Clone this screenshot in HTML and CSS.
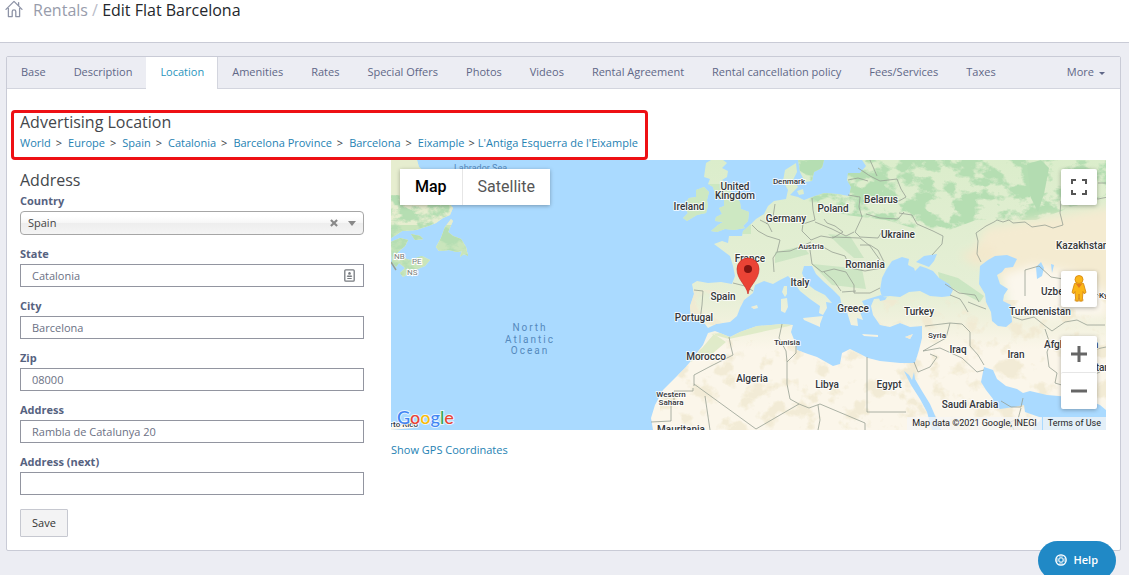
FILE: index.html
```html
<!DOCTYPE html>
<html lang="en">
<head>
<meta charset="utf-8">
<meta name="viewport" content="width=device-width, initial-scale=1">
<title>Edit Flat Barcelona</title>
<link rel="stylesheet" href="styles.css">
</head>
<body>
<header class="page-header">
  <a class="home" href="#" aria-label="Home">
    <svg width="18" height="18" viewBox="0 0 18 18" fill="none" stroke="#8d93a6" stroke-width="1.3" stroke-linejoin="round" stroke-linecap="round">
      <path d="M1 9.4 9 1.4l8 8M13.6 5.6V2.6M3.4 8.4v8.2h3.8v-5a1.8 1.8 0 0 1 3.6 0v5h3.8V8.4"/>
    </svg>
  </a>
  <h1 class="title"><a class="title-parent" href="#">Rentals</a> <span class="title-slash">/</span> Edit Flat Barcelona</h1>
</header>

<main class="panel">
  <nav class="tabs">
    <a class="tab" href="#">Base</a>
    <a class="tab" href="#">Description</a>
    <a class="tab tab-active" href="#" aria-current="page">Location</a>
    <a class="tab" href="#">Amenities</a>
    <a class="tab" href="#">Rates</a>
    <a class="tab" href="#">Special Offers</a>
    <a class="tab" href="#">Photos</a>
    <a class="tab" href="#">Videos</a>
    <a class="tab" href="#">Rental Agreement</a>
    <a class="tab" href="#">Rental cancellation policy</a>
    <a class="tab" href="#">Fees/Services</a>
    <a class="tab" href="#">Taxes</a>
    <button class="tab tab-more" type="button">More <span class="caret"></span></button>
  </nav>

  <section class="advertising">
    <h2 class="heading">Advertising Location</h2>
    <nav class="crumbs" aria-label="Advertising location">
      <a href="#">World</a><span class="sep">&gt;</span>
      <a href="#">Europe</a><span class="sep">&gt;</span>
      <a href="#">Spain</a><span class="sep">&gt;</span>
      <a href="#">Catalonia</a><span class="sep">&gt;</span>
      <a href="#">Barcelona Province</a><span class="sep">&gt;</span>
      <a href="#">Barcelona</a><span class="sep">&gt;</span>
      <a href="#">Eixample</a><span class="sep sep-last">&gt;</span>
      <a href="#">L'Antiga Esquerra de l'Eixample</a>
    </nav>
  </section>

  <div class="columns">
    <form class="address">
      <h2 class="heading">Address</h2>
      <div class="field">
        <label for="country">Country</label>
        <div class="control">
          <select id="country" class="select"><option>Spain</option></select>
          <button class="clear" type="button" aria-label="Clear country">
            <svg width="9" height="9" viewBox="0 0 9 9" stroke="#888" stroke-width="2.4"><path d="M1 1l7 7M8 1 1 8"/></svg>
          </button>
          <span class="select-arrow"></span>
        </div>
      </div>
      <div class="field">
        <label for="state">State</label>
        <div class="control">
          <input id="state" class="input" type="text" value="Catalonia">
          <svg class="contact" width="11" height="13" viewBox="0 0 11 13" fill="none" stroke="#777b80"><rect x=".8" y=".8" width="9.4" height="11.4" rx="1" stroke-width="1.3"/><circle cx="5.500" cy="4.300" r="1.200" fill="#777b80" stroke="none"/><path d="M3.300 7.500c0-2 4.400-2 4.400 0zM3.300 9.500h4.400"/></svg>
        </div>
      </div>
      <div class="field">
        <label for="city">City</label>
        <input id="city" class="input" type="text" value="Barcelona">
      </div>
      <div class="field">
        <label for="zip">Zip</label>
        <input id="zip" class="input" type="text" value="08000">
      </div>
      <div class="field">
        <label for="address">Address</label>
        <input id="address" class="input" type="text" value="Rambla de Catalunya 20">
      </div>
      <div class="field">
        <label for="address-next">Address (next)</label>
        <input id="address-next" class="input" type="text" value="">
      </div>
      <button class="save" type="submit">Save</button>
    </form>

    <div class="map-column">
      <div class="map">
        <svg class="map-canvas" viewBox="391 160 715 270" preserveAspectRatio="xMidYMid slice">
          <defs>
            <linearGradient id="ground" gradientUnits="userSpaceOnUse" x1="0" y1="160" x2="0" y2="430">
              <stop offset="0" stop-color="#dbedcb"/>
              <stop offset=".3" stop-color="#e2eed2"/>
              <stop offset=".5" stop-color="#e6efd6"/>
              <stop offset=".6" stop-color="#f1f1dd"/>
              <stop offset=".7" stop-color="#fbf6ea"/>
              <stop offset="1" stop-color="#fbf6ea"/>
            </linearGradient>
            <filter id="soft" x="-20%" y="-20%" width="140%" height="140%"><feGaussianBlur stdDeviation="5"/></filter>
            <filter id="woods" x="0" y="0" width="100%" height="100%" color-interpolation-filters="sRGB">
              <feTurbulence type="fractalNoise" baseFrequency=".045 .07" numOctaves="5" seed="8"/>
              <feColorMatrix values="0 0 0 0 .71  0 0 0 0 .87  0 0 0 0 .7  0 8 0 0 -3.500" result="n"/>
              <feComposite in="n" in2="SourceAlpha" operator="in"/>
            </filter>
            <filter id="relief" x="0" y="0" width="100%" height="100%" color-interpolation-filters="sRGB">
              <feTurbulence type="fractalNoise" baseFrequency=".05" numOctaves="4" seed="3"/>
              <feColorMatrix values="0 0 0 0 .945  0 0 0 0 .915  0 0 0 0 .82  0 7 0 0 -3.700" result="n"/>
              <feComposite in="n" in2="SourceAlpha" operator="in"/>
            </filter>
            <clipPath id="coast">
              <path d="M391 160h26l2 7 8 7 12 4 6 14 4 11 4 5-3 7-7 3-7 5-8 3-12 4-14 1-6 4-5 3z"/>
              <path d="M451 219l-6 8-4 11-5 9 3 4 10-1 8 2 5-1-2 6 4-3 4 2-2-9-5-8-8-3-5-4 5-11z"/>
              <path d="M391 242l9-4 8 2-3 6-8 7 4 4 9 3 12-4 8 4-5 6-12 5-10 6-3-4 5-5-6-5-3 4-4-5z"/>
              <path d="M411 234l9 2 3 3-8 1z"/>
              <path d="M706 163l5-3h12l4 3-5 5 6 3-1 6-5 3 6 4 4 10 8 8 1 7 8 3-1 9-5 5 2 2-11 2-9-1-8 3-6-1 7-6 5-3-8-1 1-4 6-3-3-6 5-2 0-7-5-1 2-6-6 2-2-7-5-3 2-5-6-2z"/>
              <path d="M696 190l8-3 5 5-2 8 1 6-2 7-9 2-10 6-4-3 5-5-2-3 5-4-5-4 3-4 7-1z"/>
              <path d="M692 284L697 281 708 283 721 282 732 284 735 276 733 266 730 256 722 250 714 244 722 241 728 243 729 236 742 236 743 231 750 225 756 219 764 214 768 206 774 201 786 199 788 190 783 181 785 170 796 163 797 172 793 180 798 187 790 195 798 197 804 200 812 197 824 193 838 194 849 196 851 187 847 180 848 173 860 173 866 166 862 160 1106 160 1106 430 653 430 651 418 655 405 663 390 673 380 685 368 690 362 703 345 708 333 715 331 730 337 740 332 757 326 771 325 782 324 793 325 791 332 795 342 797 350 808 354 817 357 833 366 840 364 842 353 850 349 860 354 868 358 880 361 890 362 900 363 915 363 919 350 922 338 922 326 910 327 900 323 890 327 880 325 873 315 871 306 874 299 885 298 881 295 868 299 862 301 866 309 860 312 863 320 857 318 858 326 851 325 847 312 842 306 840 297 832 289 824 282 816 274 812 266 804 266 802 273 806 283 815 290 825 295 832 303 826 302 827 308 823 315 819 313 820 306 810 299 800 291 793 281 788 276 780 280 773 284 764 281 755 285 753 293 744 300 740 308 737 316 730 322 716 324 708 328 702 320 691 319 690 306 694 294z"/>
              <path d="M784 286l3 0 0 8-2 3-3-5zM781 299l6-1 1 9-3 6-4-2zM803 318l20-2-3 8 0 3-16-7zM862 334l16 1v2l-14-1zM905 337l8-3-3 5zM797 191l6-2 1 5-5 1zM751 307l6-2 1 3-4 1z"/>
              <path d="M798 160h26l-2 8-8 4-2 9-7 1-5-10z"/>
              <path d="M391 425h22v3l-22 2z"/>
            </clipPath>
          </defs>
          <rect x="391" y="160" width="715" height="270" fill="#aadaff"/>
          <g clip-path="url(#coast)">
            <rect x="391" y="160" width="715" height="270" fill="url(#ground)"/>
            <path d="M391 160h80v95h-80z" fill="#e6edcf"/>
            <path d="M391 225h90v70h-90z" fill="#c9e5bb"/>
            <path d="M706 184h45v50h-75v-40z" fill="#c8e6be" opacity=".8"/>
            <path d="M850 160h256v35l-70 25-60 0-40 15-50-15-40-5-40-15z" fill="#000" filter="url(#woods)"/>
            <path d="M391 195h80v80h-80zM798 160h26v25h-26z" fill="#000" filter="url(#woods)"/>
            <path d="M775 252l28-6 6 8-34 9zM828 234l22 2 14 22-10 0-14-12zM812 264l50 5 4 20-34-4z" fill="#b9dfb6" opacity=".55"/>
            <path d="M938 272l20 6 26 18-4 6-40-20z" fill="#b9dfb6" opacity=".6"/>
            <path d="M985 228l60-10 70-12v110l-60-6-50-25-30-35z" fill="#f4ebd1" filter="url(#soft)"/>
            <path d="M960 255l26-10 12 8-20 14z" fill="#f3e8cc" filter="url(#soft)"/>
            <path d="M1003 275l30-10 40 8 34 20v24l-60 2-38-10z" fill="#fbf7ed" filter="url(#soft)"/>
            <path d="M660 340h446v90h-446zM690 290h65v35h-65zM875 300h231v50h-231z" fill="#000" filter="url(#relief)" opacity=".8"/>
            <path d="M711 334l18 5 60-13 6-3-40 1-25 8zM690 362l12-14 12-14 12 8-14 12z" fill="#d9e9c2" opacity=".8"/>
            <path d="M1027 164l14-4 8 8-5 26-6 18-7-14z" fill="#b3dcb1"/>
          </g>
          <g fill="#aadaff">
            <path d="M880 290l2-12 4-8 6-9 10-4 7 2-1 6 6 3 1 3 5-5 6 2 7 3 6 7 10 6 4 6-3 6-8 1-12-1-10-5-11 1-9 5-10-1-8 1z"/>
            <path d="M916 262l8-6 13-2-3 7-5 6-5-2z"/>
            <path d="M879 298l8-1-2 3-5 1z"/>
            <path d="M980 266l8-6 7-4 12-1 10 4-4 8-8 1-3 4-5 3 3 9 8 5-4 6-1 6 8 4 1 17-6 5-8-1-6-5-1-9-5-10-1-8-6-10z"/>
            <path d="M1036 267l5-5 3 6-2 8-5 3zM1051 264l1 9 2-8z"/>
            <path d="M904 371l5 4 3 5 2-8 1 7 7 12 8 13 7 16 4 10h-9l-5-18-7-13-9-14z"/>
            <path d="M984 367l9 3 4 9 9 7 11 3 6 4 7-2 17 4 23 2 13 1 17 7 6 5v27h-76l4-10 8-9-17-6-1-7-10 2-14 2-7-2 0-8-7-9-5-8z"/>
          </g>
          <g fill="none" stroke="#97a093" stroke-width=".8" stroke-linejoin="round">
            <path d="M694 290l9 1-1 14-2 15M733 283l12 3 8 5M752 225l6 6 9 5 13 4-3 12-4 6 1 14M760 220l8 4 4 8M775 204l-2 13-7 7M812 198l1 12 2 10-12 4-1 7 9 9 10-4 12 2 10-6-8-6-8-3-3-4M777 252l13-1 12-5 9-4M815 222l17 7 14 7 8-4M848 195l12 2-1 10 3 10-7 15 5 5 18 1 5-8M848 180l10-2 10 3M858 168l12 8 10 5 17-2 4 10 5 8-7 4-17-2-19 2M866 214l14 4 18 1 6-7M899 213l13 2 5 9 16 7 10 5-1 8-10 11M832 237l28 1 10 8 10 14M818 244l14 8 13 4 5 12 15 3 17-3M810 250l2 14 10 8 12-3 12 3M824 272l10 9 7 10M846 272l8 13 0 8 16 0 10-5M842 292l14-1M860 245l10 0 8 5 6 12M870 160l7 16"/>
            <path d="M981 262l-4-8 1-13-2-8 10-7 8-4 3-2 6 2 6-2 4 3 12-1 7 5 13-2 8 3 10-3-3-12 1-12 10-2 5 3 8-3 2-3 12 3 10-2"/>
            <path d="M1025 296v-26l14-4 12 11 12 2 7 8 12 6 10-4 7 7 8-2M945 284l14 9 16 2 4 7M950 295l10 4 4 6 4 7M968 302l10 4 8 3M1013 317l9 3 12-3 10 8 8 6 13-9 12-2 10 5 18 0M1045 329l5 15-3 8 2 15 8 6-2 10 10 3 3 14"/>
            <path d="M925 326l25-3 12 1 8 8 0 14 8 9 6 10M950 323l-4 15-9 5-14 8M923 351l17-3 22 10 15 14 7-2M914 362l4 10 12-5 7-10-7-3M1001 401l10 6 10 0 2-9M1021 408l-3 11-8 3 4 8"/>
            <path d="M729 337l2 10 2 8-8 4-14 7-17 9v11M782 324l-3 14 7 13 1 11 9-9v-7M787 362l0 22 3 15 9 5-43 25-62-45M693 388v3h-19v9M671 400v21l-20 1M710 430l-5-34M799 404l10 4 11-4 45 19v7M818 405l2 15-2 10M867 357v55l39 0"/>
            <path d="M1098 183h8M1080 340l12 10 14-3M1065 372l15 8 20-8"/>
            <path d="M391 262l5 8" stroke-width="1.500"/>
          </g>
          <g class="place">
            <text x="689" y="210" text-anchor="middle">Ireland</text>
            <text x="735" y="190" text-anchor="middle">United</text>
            <text x="735" y="199" text-anchor="middle">Kingdom</text>
            <text x="786" y="222" text-anchor="middle">Germany</text>
            <text x="833" y="212" text-anchor="middle">Poland</text>
            <text x="881" y="203" text-anchor="middle">Belarus</text>
            <text x="898" y="238" text-anchor="middle">Ukraine</text>
            <text x="865" y="268" text-anchor="middle">Romania</text>
            <text x="750" y="262" text-anchor="middle">France</text>
            <text x="800" y="286" text-anchor="middle">Italy</text>
            <text x="723" y="300" text-anchor="middle">Spain</text>
            <text x="694" y="321" text-anchor="middle">Portugal</text>
            <text x="853" y="312" text-anchor="middle">Greece</text>
            <text x="919" y="315" text-anchor="middle">Turkey</text>
            <text x="706" y="360" text-anchor="middle">Morocco</text>
            <text x="752" y="382" text-anchor="middle">Algeria</text>
            <text x="827" y="388" text-anchor="middle">Libya</text>
            <text x="889" y="388" text-anchor="middle">Egypt</text>
            <text x="958" y="353" text-anchor="middle">Iraq</text>
            <text x="1016" y="358" text-anchor="middle">Iran</text>
            <text x="970" y="408" text-anchor="middle">Saudi Arabia</text>
            <text x="1040" y="315" text-anchor="middle">Turkmenistan</text>
            <text x="1056" y="249">Kazakhstan</text>
            <text x="1041" y="295">Uzbekistan</text>
            <text x="1099" y="298" class="small">Kyrgyzstan</text>
            <text x="1044" y="348">Afghanistan</text>
            <text x="1071" y="371">Pakistan</text>
            <text x="657" y="433">Mauritania</text>
          </g>
          <g class="place small">
            <text x="789" y="184" text-anchor="middle">Denmark</text>
            <text x="811" y="249" text-anchor="middle">Austria</text>
            <text x="787" y="345" text-anchor="middle">Tunisia</text>
            <text x="937" y="338" text-anchor="middle">Syria</text>
            <text x="671" y="397" text-anchor="middle">Western</text>
            <text x="671" y="405" text-anchor="middle">Sahara</text>
            <text x="418" y="427" text-anchor="end">Puerto Rico</text>
          </g>
          <g class="province">
            <text x="394" y="259">NB</text>
            <text x="412" y="264">PE</text>
            <text x="407" y="275">NS</text>
          </g>
          <g class="sea">
            <text x="454" y="171" class="sea-small">Labrador Sea</text>
            <text x="530" y="331" text-anchor="middle">North</text>
            <text x="530" y="343" text-anchor="middle">Atlantic</text>
            <text x="530" y="354" text-anchor="middle">Ocean</text>
          </g>
          <path d="M748 294c-1.500-9-11-14-11-25a11 11 0 0 1 22 0c0 11-9.500 16-11 25z" fill="#ea4335" stroke="#c5221f" stroke-width=".6"/>
          <circle cx="748" cy="269" r="4" fill="#811411"/>
        </svg>

        <div class="map-types">
          <button class="map-type map-type-active" type="button">Map</button>
          <button class="map-type" type="button">Satellite</button>
        </div>
        <button class="map-button fullscreen" type="button" aria-label="Toggle fullscreen">
          <svg width="16" height="16" viewBox="0 0 16 16" fill="none" stroke="#555" stroke-width="2"><path d="M1 5V1h4M11 1h4v4M15 11v4h-4M5 15H1v-4"/></svg>
        </button>
        <div class="map-tools">
          <button class="map-button" type="button" aria-label="Street View">
            <svg width="18" height="30" viewBox="0 0 18 30">
              <ellipse cx="9" cy="26" rx="5" ry="2" fill="#d9a441" opacity=".4"/>
              <path d="M4.500 9.500Q9 7.500 13.500 9.500L16 18.500l-2 1.200-1-2.200-.8 9.500h-2.400L9 20l-.8 7H5.800L5 17.500l-1 2.200-2-1.200z" fill="#fbb618" stroke="#d98b12" stroke-width=".9"/>
              <path d="M6 10l3 4 3-4z" fill="#e57c1e"/>
              <circle cx="9" cy="5.500" r="4" fill="#fbb618" stroke="#d98b12" stroke-width=".9"/>
            </svg>
          </button>
          <div class="zoom">
            <button class="map-button" type="button" aria-label="Zoom in">
              <svg width="16" height="16" viewBox="0 0 16 16" stroke="#666" stroke-width="3"><path d="M0 8h16M8 0v16"/></svg>
            </button>
            <button class="map-button" type="button" aria-label="Zoom out">
              <svg width="16" height="16" viewBox="0 0 16 16" stroke="#666" stroke-width="3"><path d="M0 8h16"/></svg>
            </button>
          </div>
        </div>
        <svg class="google" width="64" height="24" viewBox="0 0 64 24" role="img" aria-label="Google">
          <text x="2" y="18"><tspan fill="#4285f4">G</tspan><tspan fill="#ea4335">o</tspan><tspan fill="#fbbc05">o</tspan><tspan fill="#4285f4">g</tspan><tspan fill="#34a853">l</tspan><tspan fill="#ea4335">e</tspan></text>
        </svg>
        <div class="attribution">
          <span>Map data ©2021 Google, INEGI</span>
          <a href="#">Terms of Use</a>
        </div>
      </div>
      <a class="gps" href="#">Show GPS Coordinates</a>
    </div>
  </div>
</main>

<button class="help" type="button">
  <svg width="12" height="12" viewBox="0 0 12 12" fill="none" stroke="#fff"><circle cx="6" cy="6" r="5.200" stroke-width="1.300"/><circle cx="6" cy="6" r="2.200" stroke-width="1"/><path d="M5 .8v3M7 .8v3M5 8.200v3M7 8.200v3M.8 5h3M.8 7h3M8.200 5h3M8.200 7h3" stroke-width=".8"/></svg>
  Help
</button>
</body>
</html>
```

FILE: styles.css
```css
* { box-sizing: border-box; }

body {
  margin: 0;
  min-height: 100vh;
  background: #ecedf3;
  color: #3a3d42;
  font: 11px/16px "Open Sans", "Noto Sans", sans-serif;
}

a { color: #2582b3; text-decoration: none; }
button, input, select { font: inherit; }
button { cursor: pointer; }

.page-header {
  display: flex;
  align-items: flex-start;
  gap: 10px;
  padding: 0 5px 22px;
  background: #fff;
  border-bottom: 1px solid #c9cbd6;
}

.home { display: block; height: 18px; }

.title {
  margin: 0;
  color: #24272c;
  font-size: 16px;
  font-weight: 400;
  line-height: 20px;
}

.title-parent { color: #989cab; }
.title-slash { color: #b9bcc8; }

.panel {
  margin: 13px 8px 24px 6px;
  padding-bottom: 13px;
  background: #fff;
  border: 1px solid #c9cbd6;
  border-radius: 2px;
}

.tabs {
  display: flex;
  background: #ecedf3;
  border-bottom: 1px solid #d3d5de;
}

.tab {
  padding: 7px 13px 8px 14px;
  border: 0;
  border-right: 1px solid transparent;
  background: none;
  color: #5f6787;
  white-space: nowrap;
}

.tab-active {
  margin-bottom: -1px;
  background: #fff;
  border-right-color: #d3d5de;
  color: #2a95bd;
}

.tab-more {
  display: flex;
  align-items: center;
  gap: 5px;
  margin-left: auto;
  padding-right: 14px;
}

.caret {
  margin-top: 2px;
  border: 3px solid transparent;
  border-top-color: currentColor;
  border-bottom: 0;
}

.advertising {
  width: fit-content;
  margin: 21px 0 0 4px;
  padding: 0 7px 6px 6px;
  border: 3px solid #ee1014;
  border-radius: 4px;
}

.heading {
  margin: 0;
  color: #44474c;
  font-size: 16px;
  font-weight: 400;
  line-height: 18px;
}

.crumbs {
  display: flex;
  flex-wrap: wrap;
  padding-top: 4px;
}

.sep { margin: 0 6px 0 5px; }
.sep-last { margin: 0 3px 0 4px; }

.columns {
  display: grid;
  grid-template-columns: 344fr 715fr;
  gap: 27px;
  padding: 0 14px 0 13px;
}

.address { padding-top: 11px; }

.field {
  display: grid;
  gap: 2px;
  margin-bottom: 11px;
}

.address .heading { margin-bottom: 4px; }

.field label { color: #56627f; font-weight: 700; }

.control { position: relative; display: grid; }

.input, .select {
  width: 100%;
  height: 23px;
  border: 1px solid #9295a0;
  background: #fff;
  color: #6b7184;
}

.input { padding: 0 11px; }

.select {
  height: 24px;
  padding: 0 7px;
  border-color: #a6a6a6;
  border-radius: 4px;
  background: linear-gradient(#fff 20%, #f6f6f6 50%, #eee 52%, #f4f4f4);
  color: #444;
  appearance: none;
}

.clear {
  position: absolute;
  top: 8px;
  right: 26px;
  width: 8px;
  height: 8px;
  padding: 0;
  border: 0;
  background: none;
}

.clear svg { display: block; width: 8px; height: 8px; }

.select-arrow {
  position: absolute;
  top: 10px;
  right: 8px;
  border: 4px solid transparent;
  border-top: 5px solid #888;
  border-bottom: 0;
  pointer-events: none;
}

.contact { position: absolute; top: 5px; right: 9px; }

.save {
  margin-top: 3px;
  padding: 5px 11px;
  border: 1px solid #c6c8d0;
  border-radius: 1px;
  background: #f3f3f4;
  color: #333;
}

.map {
  position: relative;
  height: 270px;
  overflow: hidden;
  background: #aadaff;
  font-family: Roboto, sans-serif;
}

.map-canvas { display: block; width: 100%; height: 100%; }

.place {
  fill: #35373a;
  stroke: #fff;
  stroke-opacity: .8;
  stroke-width: 2px;
  stroke-linejoin: round;
  paint-order: stroke;
  font-size: 10px;
  font-weight: 500;
}

.small { font-size: 8px; }

.province {
  fill: #7b7f7c;
  stroke: #fff;
  stroke-width: 2px;
  paint-order: stroke;
  font-size: 8px;
}

.sea { fill: #5589bd; font-size: 10px; letter-spacing: 2px; }
.sea-small { font-size: 9px; letter-spacing: normal; }

.map-types {
  position: absolute;
  top: 9px;
  left: 9px;
  display: flex;
  background: #fff;
  box-shadow: 0 1px 4px rgba(0, 0, 0, .3);
}

.map-type {
  padding: 8px 15px;
  border: 0;
  background: none;
  color: #565656;
  font-size: 16px;
  line-height: 20px;
}

.map-type-active { color: #000; font-weight: 500; }
.map-type + .map-type { border-left: 1px solid #e6e6e6; }

.map-button {
  display: grid;
  place-items: center;
  width: 36px;
  height: 36px;
  padding: 0;
  border: 0;
  border-radius: 2px;
  background: #fff;
  box-shadow: 0 1px 4px rgba(0, 0, 0, .3);
}

.fullscreen { position: absolute; top: 9px; right: 9px; }

.map-tools {
  position: absolute;
  right: 9px;
  bottom: 21px;
  display: grid;
  gap: 29px;
}

.zoom {
  display: grid;
  border-radius: 2px;
  background: #fff;
  box-shadow: 0 1px 4px rgba(0, 0, 0, .3);
}

.zoom .map-button { box-shadow: none; background: none; }
.zoom .map-button + .map-button { height: 37px; border-top: 1px solid #e6e6e6; }

.google {
  position: absolute;
  left: 4px;
  bottom: 0;
  stroke: #fff;
  stroke-width: 2px;
  stroke-opacity: .7;
  paint-order: stroke;
  font: 500 18px Lato, sans-serif;
}

.attribution {
  position: absolute;
  right: 0;
  bottom: 0;
  display: flex;
  gap: 1px;
  color: #222;
  font-size: 9px;
  line-height: 13px;
}

.attribution > * {
  padding: 0 5px;
  background: rgba(245, 245, 245, .75);
  color: inherit;
}

.gps { display: inline-block; margin-top: 12px; }

.help {
  position: fixed;
  right: 13px;
  bottom: -5px;
  display: flex;
  align-items: center;
  gap: 6px;
  padding: 11px 18px 12px 17px;
  border: 0;
  border-radius: 20px;
  background: #2089c6;
  color: #fff;
  font-weight: 600;
}
```
